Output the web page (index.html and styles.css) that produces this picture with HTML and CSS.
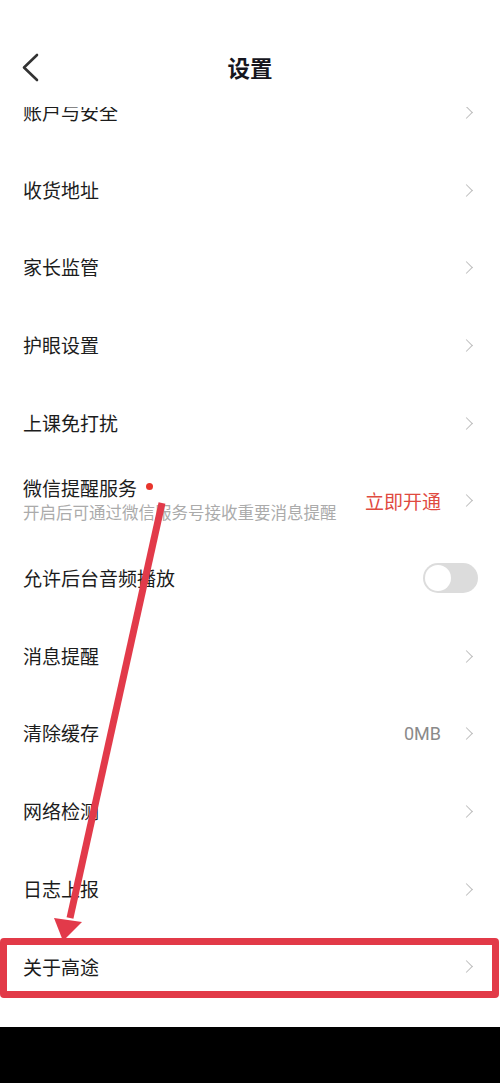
FILE: index.html
```html
<!DOCTYPE html>
<html lang="zh">
<head>
<meta charset="utf-8">
<title>设置</title>
<link rel="stylesheet" href="styles.css">
</head>
<body>
<div class="page">
  <header class="header">
    <svg class="back" width="20" height="30" viewBox="0 0 20 30"><polyline points="16,2 3,14.5 16,27" fill="none" stroke="#333" stroke-width="2.6" stroke-linecap="round" stroke-linejoin="round"/></svg>
    <h1 class="title">设置</h1>
  </header>
  <div class="viewport">
    <ul class="list">
      <li class="row"><span class="label">账户与安全</span><span class="chev"></span></li>
      <li class="row"><span class="label">收货地址</span><span class="chev"></span></li>
      <li class="row"><span class="label">家长监管</span><span class="chev"></span></li>
      <li class="row"><span class="label">护眼设置</span><span class="chev"></span></li>
      <li class="row"><span class="label">上课免打扰</span><span class="chev"></span></li>
      <li class="row">
        <div class="stack">
          <span class="label">微信提醒服务<i class="dot"></i></span>
          <span class="sub">开启后可通过微信服务号接收重要消息提醒</span>
        </div>
        <span class="action">立即开通</span><span class="chev"></span>
      </li>
      <li class="row"><span class="label">允许后台音频播放</span><span class="toggle"><i class="knob"></i></span></li>
      <li class="row"><span class="label">消息提醒</span><span class="chev"></span></li>
      <li class="row"><span class="label">清除缓存</span><span class="value">0MB</span><span class="chev"></span></li>
      <li class="row"><span class="label">网络检测</span><span class="chev"></span></li>
      <li class="row"><span class="label">日志上报</span><span class="chev"></span></li>
      <li class="row"><span class="label">关于高途</span><span class="chev"></span></li>
    </ul>
  </div>
  <div class="navbar"></div>
  <div class="highlight"></div>
  <svg class="arrow" width="500" height="1083" viewBox="0 0 500 1083">
    <line x1="162" y1="503" x2="70" y2="918" stroke="#e23a4a" stroke-width="7" stroke-linecap="butt"/>
    <polygon points="54,918 82,922 63,941" fill="#e23a4a"/>
  </svg>
</div>
</body>
</html>
```

FILE: styles.css
```css
* { box-sizing: border-box; }
html, body { margin: 0; padding: 0; background: #fff; }
body {
  font-family: "Noto Sans CJK SC", "Noto Sans", sans-serif;
  color: #222;
}
.page {
  position: relative;
  width: 500px;
  height: 1083px;
  overflow: hidden;
  display: flex;
  flex-direction: column;
}
.header {
  height: 107px;
  flex: none;
  display: flex;
  align-items: flex-start;
  justify-content: center;
  padding-top: 56px;
  position: relative;
  background: #fff;
}
.back {
  position: absolute;
  left: 21px;
  top: 53px;
}
.title {
  margin: 0;
  font-size: 22.5px;
  font-weight: 700;
  color: #16161e;
  line-height: 1;
}
.viewport {
  flex: 1;
  overflow: hidden;
}
.list {
  list-style: none;
  margin: -33.5px 0 0;
  padding: 0;
}
.row {
  height: 77.7px;
  display: flex;
  align-items: center;
  padding: 0 27px 0 23px;
}
.label {
  flex: 1;
  font-size: 19px;
  line-height: 1.2;
  color: #1c1c1c;
  display: flex;
  align-items: center;
}
.stack {
  flex: 1;
  display: flex;
  flex-direction: column;
  gap: 3px;
  padding-bottom: 2px;
}
.stack .label { flex: none; }
.sub {
  font-size: 16.5px;
  line-height: 1.2;
  color: #ababab;
  white-space: nowrap;
}
.dot {
  display: inline-block;
  width: 7px;
  height: 7px;
  border-radius: 50%;
  background: #e8352c;
  margin-left: 9px;
  margin-top: -4px;
}
.action {
  font-size: 19px;
  color: #e04a3f;
  margin-right: 21px;
}
.value {
  font-family: "Roboto", "Noto Sans", sans-serif;
  font-size: 18px;
  color: #8a8a8a;
  margin-right: 21px;
}
.chev {
  width: 9px;
  height: 9px;
  border-top: 1.5px solid #bdbdbd;
  border-right: 1.5px solid #bdbdbd;
  transform: rotate(45deg);
  margin-right: 2px;
  flex: none;
}
.toggle {
  width: 55px;
  height: 30px;
  border-radius: 15px;
  background: #dcdcdc;
  display: flex;
  align-items: center;
  padding: 0 2px;
  margin-right: -5px;
}
.knob {
  width: 26px;
  height: 26px;
  border-radius: 50%;
  background: #fff;
}
.navbar {
  height: 56px;
  flex: none;
  background: #000;
}
.highlight {
  position: absolute;
  left: 0;
  top: 938px;
  width: 499px;
  height: 60px;
  border: 7.5px solid #e23a48;
  border-radius: 4px;
}
.arrow {
  position: absolute;
  left: 0;
  top: 0;
  pointer-events: none;
}
```
